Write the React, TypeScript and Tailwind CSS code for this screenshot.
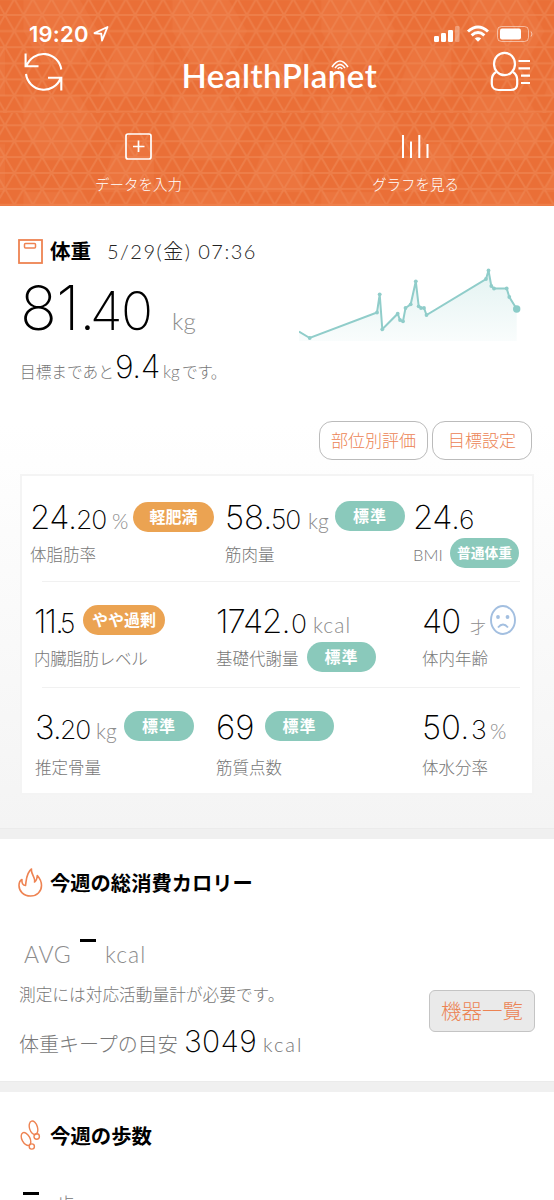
import type { ReactNode } from "react"
import clsx from "clsx"

type Tone = "warn" | "ok"

function Badge({ tone, className, children }: { tone: Tone; className?: string; children: ReactNode }) {
  return (
    <span
      className={clsx(
        "flex h-[30px] shrink-0 items-center justify-center rounded-full pb-px text-[16px] font-bold leading-none text-white",
        tone === "warn" ? "bg-[#eba352]" : "bg-[#8ac9bb]",
        className
      )}
    >
      {children}
    </span>
  )
}

type MetricProps = {
  whole: string
  wholeClass: string
  decimal?: string
  decimalClass?: string
  unit?: string
  unitClass?: string
  label: string
  labelClass?: string
  extra?: ReactNode
  labelExtra?: ReactNode
  className?: string
}

function Metric(props: MetricProps) {
  return (
    <div className={clsx("shrink-0 whitespace-nowrap", props.className)}>
      <div className="flex h-[30px] items-start">
        <div className="flex items-baseline text-black">
          <span className={clsx("shrink-0 font-['Inter'] text-[33px] font-extralight leading-[32px]", props.wholeClass)}>
            {props.whole}
          </span>
          {props.decimal && (
            <span
              className={clsx(
                "shrink-0 font-['Inter'] text-[26.5px] font-extralight leading-none tracking-[-1px]",
                props.decimalClass
              )}
            >
              {props.decimal}
            </span>
          )}
          {props.unit && (
            <span className={clsx("shrink-0 text-[21px] leading-none text-[#8c8c8c]", props.unitClass)}>
              {props.unit}
            </span>
          )}
        </div>
        {props.extra}
      </div>
      <div className="mt-[7px] flex h-[30px] items-center">
        <span className={clsx("shrink-0 pt-[4px] text-[16.5px] leading-none text-[#777]", props.labelClass)}>
          {props.label}
        </span>
        {props.labelExtra}
      </div>
    </div>
  )
}

function TrianglePattern() {
  return (
    <svg className="absolute inset-0 h-full w-full" aria-hidden="true">
      <defs>
        <pattern id="tri" width="18.6" height="32.2" patternUnits="userSpaceOnUse" x="5" y="15">
          <rect width="18.6" height="32.2" fill="#ea6f37" />
          <path d="M0 0L9.3 16.1L0 32.2M18.6 0L9.3 16.1L18.6 32.2" stroke="#ed7e49" strokeWidth="1.9" fill="none" />
          <path d="M0 0H18.6M0 16.1H18.6M0 32.2H18.6" stroke="#ed7e49" strokeWidth="1.9" />
        </pattern>
        <pattern id="tri2" width="18.6" height="31.8" patternUnits="userSpaceOnUse" x="5" y="125.3">
          <rect width="18.6" height="31.8" fill="#ea6f37" />
          <path d="M0 0L9.3 15.9L0 31.8M18.6 0L9.3 15.9L18.6 31.8" stroke="#ed7e49" strokeWidth="1.9" fill="none" />
          <path d="M0 0H18.6M0 15.9H18.6M0 31.8H18.6" stroke="#ed7e49" strokeWidth="1.9" />
        </pattern>
        <pattern id="tint" width="148.8" height="96.6" patternUnits="userSpaceOnUse" x="5" y="-1">
          <path d="M18.6 0H74.4L93 32.2L74.4 64.4H37.2L18.6 32.2Z M111.6 48.3H148.8V96.6H93Z" fill="#f08a58" fillOpacity=".22" />
        </pattern>
      </defs>
      <rect width="554" height="113" fill="url(#tri)" />
      <rect y="113" width="554" height="93" fill="url(#tri2)" />
      <rect width="554" height="206" fill="url(#tint)" />
    </svg>
  )
}

function Header() {
  return (
    <header className="relative h-[206px] bg-[#eb7139] text-white">
      <TrianglePattern />
      <div className="relative">
        <div className="flex h-[50px] items-start justify-between pl-[29px] pr-[21px] pt-[23px]">
          <div className="flex items-center">
            <span className="w-[61px] font-['Inter'] text-[22px] font-semibold leading-[22px] tracking-[0.2px]">19:20</span>
            <svg width="20" height="18" viewBox="0 0 20 18" className="ml-[3px]">
              <path d="M1.5 8.2L14.5 2L9 15.5L8.3 8.8Z" fill="none" stroke="#fff" strokeWidth="1.9" strokeLinejoin="round" />
            </svg>
          </div>
          <svg width="99" height="22" viewBox="0 0 99 22">
            <g fill="#fff">
              <rect x="0" y="13" width="5" height="6" rx="1.2" />
              <rect x="7" y="10" width="5" height="9" rx="1.2" />
              <rect x="14" y="7" width="5" height="12" rx="1.2" />
              <rect x="21" y="3" width="4.5" height="16" rx="1.2" opacity=".3" />
              <path d="M44 18.8L40.8 15.6Q44 12.8 47.2 15.6Z" />
              <rect x="66" y="5.5" width="21" height="11" rx="2" />
            </g>
            <path d="M34 8.5Q44 -.5 54 8.5M37.6 12.3Q44 6.8 50.4 12.3" fill="none" stroke="#fff" strokeWidth="3" />
            <rect x="63.5" y="3.5" width="31" height="15" rx="4" fill="none" stroke="#fff" strokeOpacity=".5" />
            <path d="M97 8.5Q99 11 97 13.5" fill="none" stroke="#fff" strokeOpacity=".6" />
          </svg>
        </div>
        <div className="flex h-[63px] justify-between pl-[23px] pr-[22px]">
          <svg width="42" height="43" viewBox="0 0 42 43" fill="none" stroke="#fff" strokeWidth="2.1">
            <path d="M38.3 19.5A18 18 0 0 0 3.500 16M2.600 3.500V16.200H15.500M3 24A18 18 0 0 0 37.500 28.500M25 27.700H38.300V40.500" />
          </svg>
          <div className="relative w-[200px] pt-[6px]">
            <span className="block whitespace-nowrap pl-[4px] font-['Lato'] text-[33px] font-semibold leading-[38px] tracking-[0.5px]">
              HealthPlanet
            </span>
            <svg width="18" height="10" viewBox="0 0 18 10" className="absolute left-[153px] top-[10px]" fill="none" stroke="#fff" strokeWidth="1.5">
              <path d="M1 7Q9 -5 17 7M4 8Q9 .8 14 8M6.7 9Q9 6 11.3 9" />
            </svg>
          </div>
          <svg width="42" height="43" viewBox="0 0 42 43" fill="none" stroke="#fff" strokeWidth="2.2">
            <ellipse cx="14.5" cy="14" rx="10.5" ry="11.2" />
            <path d="M6 22C3 24 1.8 26.5 1.8 30V34C1.8 38 5 40 8.5 40H20.5C24.5 40 27.2 38 27.2 34V30C27.2 26.5 26 24 23 22" />
            <path d="M28.5 11H40M28.5 18.3H40M31 25.7H40M31 33H40" />
          </svg>
        </div>
        <nav className="flex pt-5 text-center text-[14.5px] font-light leading-[20px]">
          <a className="flex w-[277px] flex-col items-center">
            <svg width="28" height="28" viewBox="0 0 28 28" fill="none" stroke="#fff" strokeWidth="1.7">
              <rect x="1" y="1" width="25" height="25" rx="2" />
              <path d="M13.5 7.500V19M8 13.500H19.500" />
            </svg>
            <span className="mt-[14px]">データを入力</span>
          </a>
          <a className="flex w-[277px] flex-col items-center">
            <svg width="28" height="28" viewBox="0 0 28 28" stroke="#fff" strokeWidth="2">
              <path d="M1 2V25M9 8.5V25M17.3 2V25M25.500 11V25" />
            </svg>
            <span className="mt-[14px]">グラフを見る</span>
          </a>
        </nav>
      </div>
    </header>
  )
}

// weight history, in chart pixels
const points = [
  [0, 66.5], [10.7, 73], [78, 47.5], [80.7, 29.3], [83.3, 64.3], [98.7, 48.7], [101, 55], [104, 56.3],
  [106.5, 43], [111.7, 39.3], [116.8, 16.3], [119.7, 41.3], [122, 43], [125, 43], [127.5, 50], [187, 14],
  [189.5, 5.5], [192.3, 21], [195, 23.5], [207.7, 23.5], [210.3, 32], [217.7, 44],
]

function WeightChart() {
  const line = points.map((p) => p.join(",")).join(" ")
  return (
    <svg width="224" height="80" viewBox="0 1 224 80" className="shrink-0">
      <defs>
        <linearGradient id="area" x1="0" y1="0" x2="0" y2="1">
          <stop offset="0" stopColor="#8bccc8" stopOpacity=".24" />
          <stop offset="1" stopColor="#8bccc8" stopOpacity=".05" />
        </linearGradient>
      </defs>
      <polygon points={`0,76 ${line} 217.7,76`} fill="url(#area)" />
      <polyline points={line} fill="none" stroke="#90cdca" strokeWidth="2" />
      {points.slice(1, -1).map(([x, y]) => (
        <circle key={x} cx={x} cy={y} r="1.9" fill="#90cdca" />
      ))}
      <circle cx="217.7" cy="44" r="3.7" fill="#8bccc8" />
    </svg>
  )
}

function SadFace() {
  return (
    <svg width="26" height="30" viewBox="0 0 26 30" className="shrink-0" fill="none" stroke="#a3bfe0" strokeWidth="1.9">
      <ellipse cx="13" cy="15" rx="12" ry="14" />
      <circle cx="8" cy="12" r="1.9" fill="#a3bfe0" stroke="none" />
      <circle cx="17.5" cy="12" r="1.9" fill="#a3bfe0" stroke="none" />
      <path d="M8 22.5Q13 16.5 18 22.5" />
    </svg>
  )
}

function Weight() {
  return (
    <section className="h-[622px] bg-linear-to-b from-white from-35% to-[#f4f4f4] pt-[30px]">
      <div className="flex h-[30px] items-center pl-[18px]">
        <svg width="25" height="25" viewBox="0 0 25 25" fill="none" stroke="#ee8352">
          <rect x="1" y="1" width="23" height="23" strokeWidth="1.8" />
          <rect x="6.5" y="4.5" width="11" height="4.5" rx="1" strokeWidth="1.5" />
        </svg>
        <h2 className="ml-[7px] w-[57px] text-[20.5px] font-bold leading-none text-black">体重</h2>
        <span className="whitespace-nowrap text-[20px] leading-none tracking-[1.5px] text-[#222]">5/29(金) 07:36</span>
      </div>
      <div className="flex h-[155px] justify-between pl-[20px] pr-[31px]">
        <div className="whitespace-nowrap pt-[14px]">
          <div className="flex h-[71px] items-baseline font-extralight text-black">
            <span className="w-[70px] shrink-0 font-['Inter'] text-[61px] leading-[56px] tracking-[-0.5px]">81.</span>
            <span className="w-[82px] shrink-0 font-['Inter'] text-[53px] leading-none tracking-[-1.5px]">40</span>
            <span className="text-[24px] font-light leading-none text-[#8c8c8c]">kg</span>
          </div>
          <div className="flex items-baseline text-[15.7px] leading-none text-[#777]">
            <span className="w-[95px]">目標まであと</span>
            <span className="w-[48px] font-['Inter'] text-[32px] font-extralight tracking-[-0.5px] text-black">9.4</span>
            <span className="w-[19px] text-[17px]">kg</span>
            <span className="tracking-[-0.5px]">です。</span>
          </div>
        </div>
        <WeightChart />
      </div>
      <div className="flex h-[39px] justify-end gap-[4px] pr-[22px] text-[17px] leading-none text-[#ec8353]">
        <button className="w-[109px] rounded-[13px] border border-[#bbb] bg-white">部位別評価</button>
        <button className="w-[100px] rounded-[13px] border border-[#bbb] bg-white">目標設定</button>
      </div>
      <div className="mx-[20px] mt-[14px] flex h-[321px] flex-col border-2 border-[#f4f4f4] bg-white">
        <div className="flex h-[105px] pl-[8px] pt-[25px]">
          <Metric className="w-[195px]" whole="24." wholeClass="w-[46px] tracking-[-0.5px]" decimal="20" decimalClass="w-[36px]" unit="%" unitClass="w-[21px]" label="体脂肪率"
            extra={<Badge tone="warn" className="mt-px w-[81px]">軽肥満</Badge>} />
          <Metric className="w-[188px]" whole="58." wholeClass="w-[46px]" decimal="50" decimalClass="w-[37px]" unit="kg" unitClass="w-[27px]" label="筋肉量"
            extra={<Badge tone="ok" className="w-[70px] tracking-[1px]">標準</Badge>} />
          <Metric whole="24." wholeClass="w-[46px] tracking-[-0.5px]" decimal="6" label="BMI" labelClass="w-[37px]"
            labelExtra={<Badge tone="ok" className="w-[69px] text-[13.8px]!">普通体重</Badge>} />
        </div>
        <hr className="ml-[20px] mr-[12px] border-[#f1f1f1]" />
        <div className="flex h-[105px] pl-[12px] pt-[23px]">
          <Metric className="w-[182px]" whole="11." wholeClass="w-[26px] tracking-[-2px]" decimal="5" decimalClass="w-[23px]" label="内臓脂肪レベル" labelClass="tracking-[-0.3px]"
            extra={<Badge tone="warn" className="w-[82px]">やや過剰</Badge>} />
          <Metric className="w-[206px]" whole="1742." wholeClass="w-[75px] tracking-[-1px]" decimal="0" decimalClass="w-[22px]" unit="kcal" unitClass="tracking-[1px]" label="基礎代謝量" labelClass="w-[91px]"
            labelExtra={<Badge tone="ok" className="w-[69px] tracking-[1px]">標準</Badge>} />
          <Metric whole="40" wholeClass="w-[48px] tracking-[-1px]" unit="才" unitClass="w-[20px] text-[16px]!" label="体内年齢" extra={<SadFace />} />
        </div>
        <hr className="ml-[20px] mr-[12px] border-[#f1f1f1]" />
        <div className="flex h-[105px] pl-[13px] pt-[23px]">
          <Metric className="w-[181px]" whole="3." wholeClass="w-[25px] tracking-[-1px]" decimal="20" decimalClass="w-[36px]" unit="kg" unitClass="w-[28px]" label="推定骨量" labelClass="mt-[6px]"
            extra={<Badge tone="ok" className="w-[70px] tracking-[1px]">標準</Badge>} />
          <Metric className="w-[206px]" whole="69" wholeClass="w-[49px]" label="筋質点数" labelClass="mt-[6px]"
            extra={<Badge tone="ok" className="w-[69px] tracking-[1px]">標準</Badge>} />
          <Metric whole="50." wholeClass="w-[49px]" decimal="3" decimalClass="w-[19px]" unit="%" label="体水分率" labelClass="mt-[6px]" />
        </div>
      </div>
    </section>
  )
}

function Divider() {
  return <div className="h-[11px] border-t border-[#ebebeb] bg-[#f0f0f0]" />
}

function Calories() {
  return (
    <section className="h-[242px] bg-white pt-[28px]">
      <div className="flex h-[30px] items-center pl-[18px]">
        <svg width="25" height="29" viewBox="0 0 25 29" fill="none" stroke="#ee8352" strokeWidth="1.6" strokeLinejoin="round">
          <path d="M12.5 28C5.5 28 1 23 1 17.5C1 15 2 12.5 4 11.5C3.5 15 5 17.5 7.5 17.5C8.5 12 8 5 13.5 1C12.5 6 18 10 16.5 14C18 13 19 11 19.3 7.5C22 10.5 23.5 14 23.5 17.5C23.5 23.5 19 28 12.5 28Z" />
        </svg>
        <h2 className="ml-[7px] pt-[2px] text-[20.3px] font-bold leading-none text-black">今週の総消費カロリー</h2>
      </div>
      <div className="mt-[40px] flex h-[48px] items-baseline pl-[24px] text-[23px] text-[#8c8c8c]">
        <span className="w-[56px] tracking-[0.5px]">AVG</span>
        <span className="mt-[2px] h-[3px] w-[16px] self-start bg-black" />
        <span className="ml-[9px] tracking-[1px]">kcal</span>
      </div>
      <div className="flex justify-between pr-[19px] text-[#777]">
        <div className="whitespace-nowrap pl-[19px]">
          <p className="text-[16.7px] leading-[20px]">測定には対応活動量計が必要です。</p>
          <p className="mt-[19px] flex items-baseline text-[20px] leading-[34px]">
            <span className="w-[165px]">体重キープの目安</span>
            <span className="w-[79px] font-['Inter'] text-[30px] font-extralight tracking-[0.3px] text-black">3049</span>
            <span className="tracking-[2px]">kcal</span>
          </p>
        </div>
        <button className="mt-[5px] h-[42px] w-[106px] shrink-0 rounded-[6px] border border-[#c4c4c4] bg-[#eaeaea] text-[20.5px] leading-none text-[#ec8353]">
          機器一覧
        </button>
      </div>
    </section>
  )
}

function Steps() {
  return (
    <section className="h-[108px] overflow-hidden bg-white pt-[28px]">
      <div className="flex h-[30px] items-center pl-[18px]">
        <svg width="25" height="30" viewBox="0 0 25 30" fill="none" stroke="#ee8352" strokeWidth="1.4">
          <ellipse cx="15.5" cy="7.8" rx="4" ry="7" transform="rotate(-16 15.5 7.8)" />
          <circle cx="18.7" cy="16.5" r="2.7" />
          <ellipse cx="8" cy="19" rx="4" ry="7" transform="rotate(-28 8 19)" />
          <circle cx="13.8" cy="26.5" r="2.6" />
        </svg>
        <h2 className="ml-[7px] pt-[2px] text-[20.4px] font-bold leading-none text-black">今週の歩数</h2>
      </div>
      <div className="mt-[42px] flex pl-[23px] text-[20px] leading-none text-[#8c8c8c]">
        <span className="h-[3px] w-[16px] bg-black" />
        <span className="ml-[17px] mt-[3px]">歩</span>
      </div>
    </section>
  )
}

export default function App() {
  return (
    <main className="h-[1200px] w-[554px] overflow-hidden bg-white font-['Lato','Noto_Sans_CJK_JP',sans-serif] font-light">
      <Header />
      <Weight />
      <Divider />
      <Calories />
      <Divider />
      <Steps />
    </main>
  )
}
